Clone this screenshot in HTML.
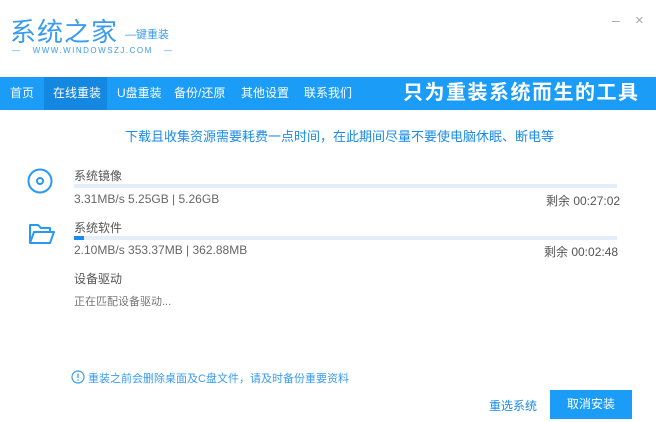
<!DOCTYPE html>
<html><head><meta charset="utf-8"><style>
body{margin:0;width:656px;height:422px;background:#fff;font-family:"Liberation Sans","Noto Sans CJK SC",sans-serif;position:relative;overflow:hidden}
.a{position:absolute;white-space:nowrap}
.nav{position:absolute;left:0;top:77px;width:656px;height:33px;background:#1a9cf7}
.nav span{position:absolute;top:0;line-height:33px;color:#fff;font-size:12px}
.bar{position:absolute;left:74px;width:543px;height:4px;background:#e4edf8}
.g{color:#666;font-size:12px}
</style></head><body>
<div class="a" style="left:10px;top:12px;font-size:26px;color:#3a9cf0;letter-spacing:1px">系统之家</div>
<div class="a" style="left:125px;top:26px;font-size:11px;color:#3a9cf0">—键重装</div>
<div class="a" style="left:12px;top:46px;font-size:8px;color:#3a9cf0;letter-spacing:1.5px">—&nbsp;&nbsp;&nbsp;WWW.WINDOWSZJ.COM&nbsp;&nbsp;&nbsp;—</div>
<div class="a" style="left:612px;top:12px;font-size:14px;color:#aaa">–</div>
<div class="a" style="left:635px;top:12px;font-size:15px;color:#aaa">×</div>
<div class="nav">
<div style="position:absolute;left:44px;top:0;width:63px;height:33px;background:#1487e0"></div>
<span style="left:10px">首页</span><span style="left:53px">在线重装</span><span style="left:117px">U盘重装</span><span style="left:174px">备份/还原</span><span style="left:241px">其他设置</span><span style="left:304px">联系我们</span>
<span style="left:403px;font-size:20px;font-weight:bold;letter-spacing:1.5px">只为重装系统而生的工具</span>
</div>
<div class="a" style="left:125px;top:126px;font-size:13px;color:#1a8be8">下载且收集资源需要耗费一点时间，在此期间尽量不要使电脑休眠、断电等</div>
<svg class="a" style="left:27px;top:168px" width="26" height="26"><circle cx="13" cy="13" r="11.5" fill="none" stroke="#2a99f5" stroke-width="2"/><circle cx="13" cy="13" r="3" fill="none" stroke="#2a99f5" stroke-width="2"/></svg>
<svg class="a" style="left:28px;top:222px" width="28" height="24"><path d="M2 21V3h8l3 3h9v4M2 21l4-11h20l-4 11z" fill="none" stroke="#2a99f5" stroke-width="2" stroke-linejoin="round"/></svg>
<div class="a g" style="left:74px;top:167px;color:#555">系统镜像</div>
<div class="bar" style="top:184px"></div>
<div class="a g" style="left:74px;top:192px">3.31MB/s 5.25GB | 5.26GB</div>
<div class="a g" style="left:546px;top:192px;color:#555">剩余 00:27:02</div>
<div class="a g" style="left:74px;top:219px;color:#555">系统软件</div>
<div class="bar" style="top:236px"><div style="width:10px;height:4px;background:#1a8bf0"></div></div>
<div class="a g" style="left:74px;top:243px">2.10MB/s 353.37MB | 362.88MB</div>
<div class="a g" style="left:544px;top:243px;color:#555">剩余 00:02:48</div>
<div class="a g" style="left:74px;top:270px;color:#555">设备驱动</div>
<div class="a g" style="left:74px;top:293px;font-size:11px;color:#777">正在匹配设备驱动...</div>
<svg class="a" style="left:71px;top:370px" width="14" height="14"><circle cx="7" cy="7" r="6" fill="none" stroke="#3a9cf0" stroke-width="1.2"/><path d="M7 3.5v4.5M7 9.5v1.2" stroke="#3a9cf0" stroke-width="1.3"/></svg>
<div class="a" style="left:88px;top:370px;font-size:11px;color:#3a9cf0">重装之前会删除桌面及C盘文件，请及时备份重要资料</div>
<div class="a" style="left:489px;top:397px;font-size:12px;color:#1a8be8">重选系统</div>
<div class="a" style="left:550px;top:390px;width:82px;height:29px;background:#1a9cf7;color:#fff;font-size:12px;line-height:29px;text-align:center">取消安装</div>
</body></html>
